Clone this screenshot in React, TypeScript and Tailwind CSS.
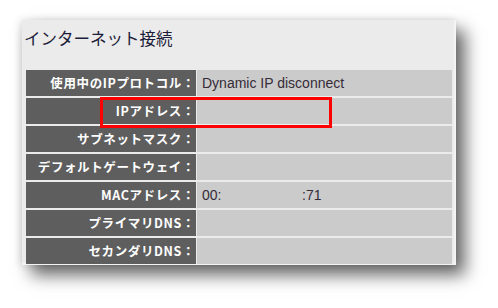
import React from "react";

const rows: { label: string; value?: React.ReactNode }[] = [
  { label: "使用中のIPプロトコル：", value: "Dynamic IP disconnect" },
  { label: "IPアドレス：" },
  { label: "サブネットマスク：" },
  { label: "デフォルトゲートウェイ：" },
  {
    label: "MACアドレス：",
    value: (
      <>
        <span className="inline-block w-[100px]">00:</span>
        <span>:71</span>
      </>
    ),
  },
  { label: "プライマリDNS：" },
  { label: "セカンダリDNS：" },
];

export default function App() {
  return (
    <div className="w-[498px] h-[308px] bg-white overflow-hidden pl-[22px] pt-[20px]">
      <div className="w-[434px] h-[245px] bg-[#ebebeb] shadow-[9px_10px_16px_rgba(0,0,0,0.6),-2px_0_8px_rgba(0,0,0,0.12)] pt-[8px] pl-[2px] border-r-2 border-b-2 border-[#f4f4f4]">
        <div
          className="text-[16.5px] leading-[20px] text-[#1c1c38] h-[42px]"
          style={{ fontFamily: '"Noto Sans CJK JP", sans-serif' }}
        >
          インターネット接続
        </div>
        <div className="relative ml-[2px] w-[426px] flex flex-col gap-[2px]">
          {rows.map((r, i) => (
            <div key={i} className="flex h-[26px] gap-[1px]">
              <div
                className="w-[170px] bg-[#5e5e5e] text-white font-bold text-[12.5px] flex items-center justify-end pr-[1px] tracking-[0.6px]"
                style={{ fontFamily: '"Noto Sans CJK JP", sans-serif' }}
              >
                {r.label}
              </div>
              <div
                className="flex-1 bg-[#cbcbcb] text-[#352c38] text-[14px] flex items-center pl-[5px]"
                style={{ fontFamily: '"Liberation Sans", Arial, sans-serif' }}
              >
                {r.value}
              </div>
            </div>
          ))}
          <div className="absolute left-[74px] top-[27px] w-[232px] h-[31px] border-[3px] border-[#ff0000]" />
        </div>
      </div>
    </div>
  );
}
